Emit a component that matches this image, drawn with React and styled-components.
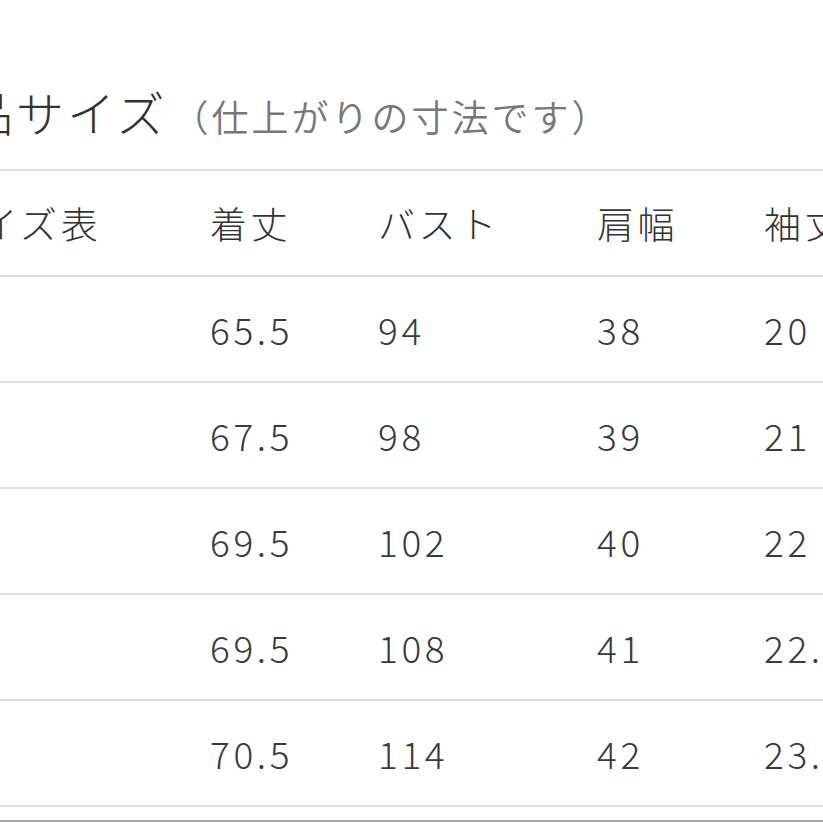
import React from "react";
import styled, { createGlobalStyle } from "styled-components";

const GlobalStyle = createGlobalStyle`
  html, body {
    margin: 0;
    padding: 0;
    background: #fff;
  }
  body {
    font-family: "Noto Sans CJK JP", "Noto Sans", sans-serif;
    font-weight: 300;
    color: #333;
  }
`;

const Page = styled.div`
  width: 823px;
  height: 823px;
  overflow: hidden;
  background: #fff;
`;

const Wrapper = styled.div`
  margin-left: -86px;
  width: 1000px;
`;

const TitleRow = styled.div`
  height: 169px;
  display: flex;
  align-items: flex-end;
  padding-bottom: 34px;
  box-sizing: border-box;
  letter-spacing: 3px;
`;

const Title = styled.h2`
  margin: 0;
  font-size: 48px;
  font-weight: 300;
  line-height: 1;
  color: #333;
`;

const Note = styled.span`
  font-size: 37px;
  font-weight: 350;
  line-height: 1;
  color: #777;
  margin-left: 4px;
`;

const Table = styled.div`
  border-top: 2px solid #dedede;
  border-bottom: 2px solid #dedede;
`;

const Row = styled.div`
  display: grid;
  grid-template-columns: 270px 168px 219px 167px 1fr;
  height: 104px;
  align-items: center;
  & + & {
    border-top: 2px solid #dedede;
  }
`;

const Cell = styled.div`
  padding-left: 26px;
  font-size: 37px;
  letter-spacing: 3.6px;
  line-height: 1;
  color: ${(p) => (p.$head ? "#333" : "#3a3a3a")};
  white-space: nowrap;
`;

const Divider = styled.div`
  margin-top: 13px;
  border-top: 2px solid #a8a8a8;
`;

const headers = ["サイズ表", "着丈", "バスト", "肩幅", "袖丈"];

const rows = [
  ["", "65.5", "94", "38", "20"],
  ["", "67.5", "98", "39", "21"],
  ["", "69.5", "102", "40", "22"],
  ["", "69.5", "108", "41", "22.5"],
  ["", "70.5", "114", "42", "23.5"],
];

export default function App() {
  return (
    <Page>
      <GlobalStyle />
      <Wrapper>
        <TitleRow>
          <Title>商品サイズ</Title>
          <Note>（仕上がりの寸法です）</Note>
        </TitleRow>
        <Table>
          <Row>
            {headers.map((h) => (
              <Cell key={h} $head>
                {h}
              </Cell>
            ))}
          </Row>
          {rows.map((r, i) => (
            <Row key={i}>
              {r.map((v, j) => (
                <Cell key={j}>{v}</Cell>
              ))}
            </Row>
          ))}
        </Table>
        <Divider />
      </Wrapper>
    </Page>
  );
}
